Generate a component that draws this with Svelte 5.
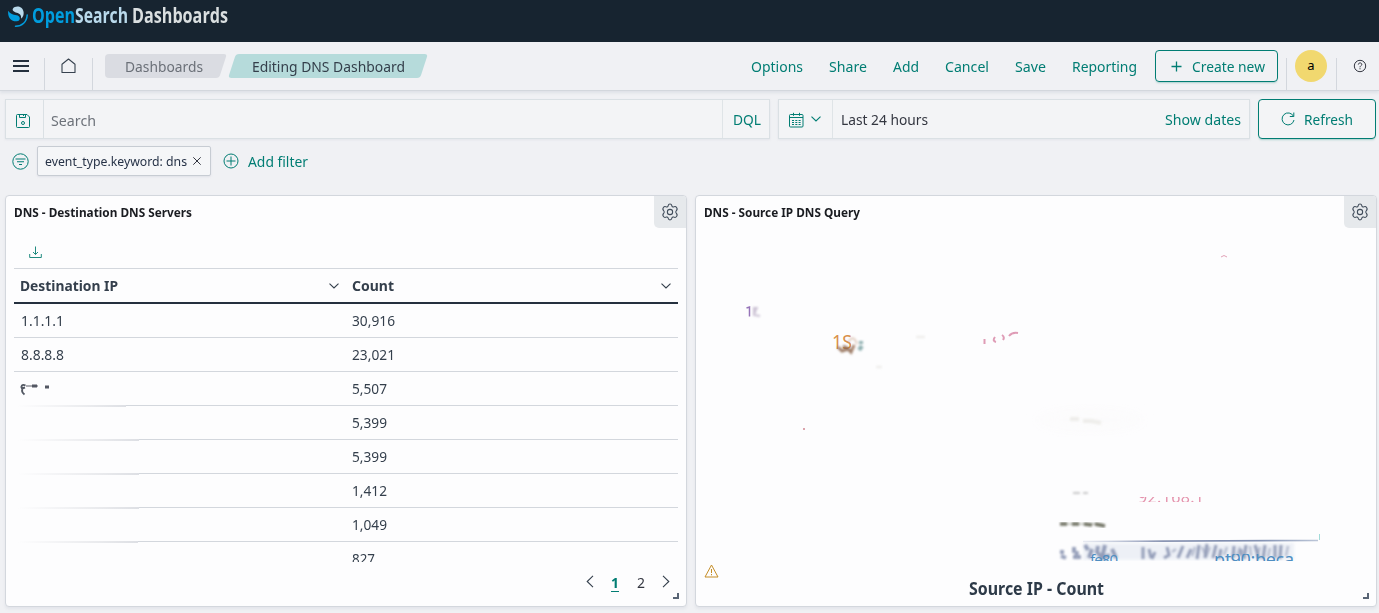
<script lang="ts">
  // Condenses a label horizontally so that it fills its column exactly.
  function fit(node: HTMLElement, width: number) {
    const inner = node.firstElementChild as HTMLElement;
    const natural = inner.getBoundingClientRect().width;
    if (natural) inner.style.transform = `scaleX(${width / natural})`;
  }

  const menu = [
    { label: 'Options', width: 52 },
    { label: 'Share', width: 38 },
    { label: 'Add', width: 26 },
    { label: 'Cancel', width: 44 },
    { label: 'Save', width: 31 },
    { label: 'Reporting', width: 65 }
  ];

  const rows = [
    { ip: '1.1.1.1', count: '30,916', width: 43, fade: 0 },
    { ip: '8.8.8.8', count: '23,021', width: 43, fade: 0 },
    { ip: '', count: '5,507', width: 35, fade: 112 },
    { ip: '', count: '5,399', width: 35, fade: 125 },
    { ip: '', count: '5,399', width: 35, fade: 125 },
    { ip: '', count: '1,412', width: 35, fade: 125 },
    { ip: '', count: '1,049', width: 35, fade: 124 },
    { ip: '', count: '827', width: 23, fade: 0 }
  ];
</script>

{#snippet t(text: string, width: number)}
  <span class="fit" style:width="{width}px" use:fit={width}><span>{text}</span></span>
{/snippet}

{#snippet gear()}
  <button class="gear" aria-label="Panel options">
    <svg width="18" height="18" viewBox="-.5 -.5 17 17" fill="none" stroke="#404c5a" stroke-linejoin="round">
      <path d="M6.200 2.300Q6.500.500 8 .500T9.800 2.300Q10.200 3.500 11.300 3.200 13.300 2.300 14.200 3.700 15.400 5.500 14 6.600 12.800 8 14 9.400 15.400 10.500 14.200 12.300 13.300 13.700 11.300 12.800 10.200 12.500 9.800 13.700 9.500 15.500 8 15.500T6.200 13.700Q5.800 12.500 4.700 12.800 2.700 13.700 1.800 12.300.600 10.500 2 9.400 3.200 8 2 6.600.600 5.500 1.800 3.700 2.700 2.300 4.700 3.200 5.800 3.500 6.200 2.300Z" />
      <circle cx="8" cy="8" r="2.500" />
    </svg>
  </button>
{/snippet}

{#snippet chevron()}
  <svg class="chev" width="10" height="6" viewBox="0 0 10 6" fill="none" stroke="currentColor" stroke-width="1.100"><path d="M.5.7 5 5 9.500.7" /></svg>
{/snippet}

<div class="page">
  <header class="brand">
    <svg class="mark" width="20" height="22" viewBox="0 0 20 22">
      <path d="M.200 5.700C-.600 12.500 3.400 16.700 8.700 16.300c3.100-.3 4-3.300 2.100-5.100C8.300 8.900 3.700 11 .200 5.700Z" fill="#009dde" />
      <path d="M5 3.400C7.200.300 14.700.500 15.600 7c.4 3.400-1.200 6-2.500 6.500.500-3.700-1.700-5-4.300-5.800C6 6.900 3.800 5.300 5 3.400Z" fill="#b9d9eb" />
      <path d="M19.200 10C18.800 17 14 21.200 7.500 21.200" fill="none" stroke="#009dde" stroke-width="1.500" stroke-linecap="round" />
    </svg>
    <span class="open">{@render t('Open', 43)}</span><span class="search-word">{@render t('Search', 53)}</span><span class="dash">{@render t('Dashboards', 96)}</span>
  </header>

  <nav class="nav">
    <button class="burger" aria-label="Menu"><i></i><i></i><i></i></button>
    <span class="rule"></span>
    <button class="home" aria-label="Home">
      <svg width="15" height="16" viewBox="0 0 15 16" fill="none" stroke="#37424f" stroke-width="1.100"><path d="M1 14.500V6.200L7.500 1 14 6.200V14.500Z" stroke-linejoin="round" /></svg>
    </button>
    <span class="rule"></span>
    <div class="crumb first">{@render t('Dashboards', 78)}</div>
    <div class="crumb last">{@render t('Editing DNS Dashboard', 153)}</div>
    <div class="menu">
      {#each menu as item}<span>{@render t(item.label, item.width)}</span>{/each}
    </div>
    <button class="create">
      <svg width="11" height="11" viewBox="0 0 11 11" stroke="#017d73" stroke-width="1.300"><path d="M5.500.5v10M.5 5.500h10" /></svg>
      {@render t('Create new', 73)}
    </button>
    <span class="rule r3"></span>
    <span class="avatar">a</span>
    <span class="rule r4"></span>
    <svg class="help" width="14" height="14" viewBox="0 0 14 14" fill="none" stroke="#343741"><circle cx="7" cy="7" r="5.700" /><path d="M5.300 5.600c0-2.300 3.500-2.200 3.500-.2C8.800 6.700 7 6.700 7 8.300M7 9.200v1.100" /></svg>
  </nav>

  <section class="query">
    <div class="box search">
      <span class="save">
        <svg width="14" height="14" viewBox="0 0 14 14" fill="none" stroke="#017d73"><path d="M.5 1.500q0-1 1-1h9.500l2.500 2.500v9.500q0 1-1 1h-11q-1 0-1-1ZM3.500.5v3h6v-3M7.500.5v1.500" /><circle cx="7" cy="9" r="1.500" /></svg>
      </span>
      <span class="placeholder">{@render t('Search', 45)}</span>
      <span class="dql">{@render t('DQL', 28)}</span>
    </div>
    <div class="box date">
      <span class="cal">
        <svg width="15" height="16" viewBox="0 0 15 16" fill="none" stroke="#017d73"><rect x=".5" y="2.500" width="13.500" height="12.500" rx="1" /><path d="M.5 5.500h13.500M4.500.8v3M10.500.8v3" /><path d="M3 8.500h9M3 10.500h9M3 12.500h9" stroke-dasharray="2 1.300" /></svg>
        {@render chevron()}
      </span>
      <span class="range">{@render t('Last 24 hours', 87)}</span>
      <span class="show">{@render t('Show dates', 76)}</span>
    </div>
    <button class="refresh">
      <svg width="14" height="14" viewBox="0 0 14 14" fill="none" stroke="#017d73"><path d="M12.500 4.300A6 6 0 1 0 13 8M12.800.5v4h-4" /></svg>
      {@render t('Refresh', 49)}
    </button>
  </section>

  <section class="filters">
    <svg width="17" height="17" viewBox="0 0 17 17" fill="none" stroke="#017d73"><circle cx="8.500" cy="8.500" r="7.700" /><path d="M3.500 6h10M5 8.800h7M7 11.500h3" stroke-width="1.100" /></svg>
    <span class="pill"><span class="term">{@render t('event_type.keyword: dns', 142)}</span><svg width="8" height="8" viewBox="0 0 8 8" stroke="#343741" stroke-width="1"><path d="m.3.3 7.400 7.400M7.700.3.3 7.700" /></svg></span>
    <svg class="plus" width="16" height="16" viewBox="0 0 16 16" fill="none" stroke="#017d73"><circle cx="8" cy="8" r="7" /><path d="M8 3.500v9M3.500 8h9" /></svg>
    <span class="add">{@render t('Add filter', 60)}</span>
  </section>

  <main class="grid">
    <article class="panel">
      <div class="head"><h2>{@render t('DNS - Destination DNS Servers', 178)}</h2>{@render gear()}</div>
      <div class="download">
        <svg width="13" height="13" viewBox="0 0 13 13" fill="none" stroke="#218b80"><path d="M6.500.5v8M4 6l2.500 2.500L9 6M.7 8v3.500h11.600V8" /></svg>
      </div>
      <div class="table">
        <div class="tr th">
          <div class="td">{@render t('Destination IP', 98)}{@render chevron()}</div>
          <div class="td">{@render t('Count', 42)}{@render chevron()}</div>
        </div>
        {#each rows as row, i}
          <div class="tr">
            <div class="td" class:faded={row.fade} style:--fade="{row.fade}px">
              {#if row.ip}<span class="ip">{@render t(row.ip, row.width)}</span>{/if}
              {#if i === 2}
                <svg class="smudge" width="38" height="20" viewBox="0 0 38 20" fill="none">
                  <defs><filter id="soft"><feGaussianBlur stdDeviation=".65" /></filter></defs>
                  <g filter="url(#soft)" stroke="#535963">
                    <path d="M5.500 3.500C2 1.500.5 5 2 6.500l3-1M2.500 7c-1 2 0 4 2 5.500" stroke-width="1.900" />
                    <path d="M6 4h12" stroke-width="1.300" opacity=".75" /><path d="M12 4h5M25 5h4" stroke-width="3" />
                  </g>
                </svg>
              {/if}
            </div>
            <div class="td">{@render t(row.count, row.width)}</div>
          </div>
        {/each}
      </div>
      <div class="pager">
        <svg width="8" height="13" viewBox="0 0 8 13" fill="none" stroke="#343f4c" stroke-width="1.100"><path d="M7 .8 1.200 6.500 7 12.200" /></svg>
        <span class="current">{@render t('1', 8)}</span><span class="other">{@render t('2', 8)}</span>
        <svg width="8" height="13" viewBox="0 0 8 13" fill="none" stroke="#343f4c" stroke-width="1.100"><path d="M1 .8 6.800 6.500 1 12.200" /></svg>
      </div>
      <i class="handle"></i>
    </article>

    <article class="panel">
      <div class="head"><h2>{@render t('DNS - Source IP DNS Query', 156)}</h2>{@render gear()}</div>
      <svg class="cloud" width="680" height="333" viewBox="696 228 680 333">
        <defs>
          <filter id="b1" x="-20%" y="-80%" width="140%" height="260%"><feGaussianBlur stdDeviation=".8" /></filter>
          <filter id="b2" x="-20%" y="-80%" width="140%" height="260%"><feGaussianBlur stdDeviation="1.400" /></filter>
          <filter id="b8"><feGaussianBlur stdDeviation="5" /></filter>
          <clipPath id="c1"><rect x="830" y="330" width="21" height="19" /></clipPath>
          <clipPath id="c2"><path d="M1130 497h88v5h-88z" /></clipPath>
          <clipPath id="c3"><path d="M1085 554h212v7h-212z" /></clipPath>
          <linearGradient id="lg" x1="1080" x2="1318" gradientUnits="userSpaceOnUse"><stop stop-color="#a8b3cd" stop-opacity=".2" /><stop offset=".35" stop-color="#7c88a9" /><stop offset=".75" stop-color="#8291b2" /><stop offset="1" stop-color="#bcc6d8" /></linearGradient>
        </defs>
        <ellipse cx="1090" cy="420" rx="55" ry="14" fill="#fbfafb" opacity=".5" filter="url(#b8)" />
        <g fill="none">
          <path d="M746.500 308l3-1v9.500" stroke="#9674b9" stroke-width="1.500" />
          <path d="M753 308h5M754 309v6l6 1M756 309l-1 4" stroke="#b3a4bf" stroke-width="2" opacity=".65" filter="url(#b1)" />
          <text x="832" y="348.500" font-size="20" fill="#d99049" clip-path="url(#c1)" textLength="20" lengthAdjust="spacingAndGlyphs">1S</text>
          <g filter="url(#b1)">
            <path d="M838 347l4 4 6-2 3 3 3-7M843 346l6 3" stroke="#8e6950" stroke-width="3" opacity=".85" />
            <path d="M848 343q5-10 9 1M853 350l2-5" stroke="#c9a287" stroke-width="2" opacity=".5" />
            <path d="M861 341v3M862 346l-3 4" stroke="#729b9c" stroke-width="4" opacity=".8" />
          </g>
          <g stroke="#d98ba9" stroke-width="2" opacity=".85"><path d="M984.500 339v5M995 337q-3 4 1 5M1002 335q3 2 1 5M1009 336q3-4 9-3" /></g>
          <path d="M1221 257q3-3 6 0" stroke="#e2a2b7" /><circle cx="804" cy="429" r="1" fill="#cf8690" />
          <g filter="url(#b1)" stroke="#d6d3cc"><path d="M1070 419h9M1083 421h8l10 2" stroke-width="4" opacity=".35" /><path d="M916 337h9M876 367h6" stroke-width="3" opacity=".3" /><path d="M1073 493h7M1083 493h5" stroke="#969696" stroke-width="2" opacity=".5" /></g>
          <text x="1138" y="503" font-size="16" fill="#df7999" clip-path="url(#c2)" textLength="66" opacity=".8">92.168.1</text>
          <g filter="url(#b1)" stroke="#6c6e5e"><path d="M1060 524h7M1072 524h7M1084 524l8 1M1095 524l10 2" stroke-width="3.500" opacity=".95" /><path d="M1062 524h40" stroke-width="1.500" opacity=".5" /></g>
          <path d="M1083 541.500 1318 540.500" stroke="url(#lg)" stroke-width="1.700" />
          <path d="M1319.500 534v6" stroke="#70c9c5" opacity=".65" />
          <rect x="1083" y="543" width="211" height="17" fill="#dfe5f0" filter="url(#b2)" opacity=".5" />
          <g filter="url(#b1)" stroke="#7682a4" opacity=".75">
            <path d="M1060 552h4M1061 556l5 2M1074 547v6M1073 557h8M1077 551l-1 8M1085 545l3 5M1092 549l-3 9M1098 546l-1 6 5 6M1105 545l-3 13 8-3M1112 549l4 9" stroke-width="4" />
            <path d="M1143 547v12M1149 549l2 9M1155 552l-3 7M1167 547l2 8-5 3M1178 558l5-12M1187 558l4-9M1197 559l2-14M1205 558l2-14M1213 558l3-13M1221 549l-2 10M1234 546l-1 12M1241 549v7M1246 545l-2 14M1255 545l4 14M1265 545l-2 14M1275 545v13M1281 545l-1 14" stroke-width="3" />
            <path d="M1172 552l4-3M1192 556l3-9M1202 547l4 9M1210 547l-4 10M1227 547l-3 8M1237 556l3-9M1250 546l1 10M1260 547l-3 10M1270 548l-2 9M1288 546l-2 10" stroke-width="2.500" opacity=".6" />
          </g>
          <text x="1090" y="565" font-size="15" fill="#4f8ec2" clip-path="url(#c3)" textLength="28">fe80</text>
          <text x="1214" y="566" font-size="18" fill="#4f8ec2" clip-path="url(#c3)" textLength="80">pf90:beca</text>
        </g>
      </svg>
      <div class="caption">
        <svg width="15" height="14" viewBox="0 0 15 14" fill="none" stroke="#c58d26"><path d="M7.500 1 14 13H1Z" stroke-linejoin="round" /><path d="M7.500 5v4M7.500 10v1.300" /></svg>
        {@render t('Source IP - Count', 135)}
      </div>
      <i class="handle"></i>
    </article>
  </main>
</div>

<style>
  :global(body) { margin: 0; background: #f0f1f4; overflow: hidden; }
  .page { width: 1379px; height: 613px; overflow: hidden; display: flex; flex-direction: column; font: 15px/20px "Noto Sans", "Open Sans", sans-serif; color: #343741; background: #f0f1f4; }
  .page * { box-sizing: border-box; }
  button { font: inherit; color: inherit; background: none; border: 0; padding: 0; display: flex; align-items: center; }
  svg { display: block; flex: none; }
  .fit { display: inline-block; white-space: nowrap; flex: none; }
  .fit > span { display: inline-block; transform-origin: 0 50%; }

  .brand { height: 42px; flex: none; background: #172430; display: flex; align-items: flex-start; padding: 5px 0 0 8px; font: bold 22px/20px "Open Sans", sans-serif; }
  .brand > span { margin-top: -1px; }
  .mark { margin: 0 4px 0 0; }
  .open { color: #009dde; }
  .search-word { color: #b9d9eb; }
  .brand .dash { color: #dadfe0; margin-left: 4px; }

  .nav { height: 49px; flex: none; display: flex; align-items: center; border-bottom: 1px solid #d3d7dd; box-shadow: 0 2px 3px #98a2b333; padding-left: 13px; }
  .burger { width: 16px; height: 12px; flex-direction: column; justify-content: space-between; align-items: stretch; }
  .burger i { height: 2px; background: #25303e; }
  .rule { width: 1px; height: 32px; align-self: flex-end; background: #d3d7dd; flex: none; margin-left: 15px; }
  .home { margin-left: 16px; }
  .home + .rule { margin-left: 16px; }
  .crumb { height: 24px; position: relative; z-index: 0; display: flex; align-items: center; }
  .first { width: 121px; margin-left: 12px; padding-left: 20px; color: #6b7078; }
  .first::before, .first::after { content: ""; position: absolute; z-index: -1; inset: 0 20px 0 0; border-radius: 4px 0 0 4px; background: #dadce2; }
  .first::after { inset: 0 3px 0 40px; border-radius: 0 3px 3px 0; transform: skewX(-18deg); }
  .last { width: 200px; margin-left: 2px; padding-left: 24px; color: #343f4b; }
  .last::before { content: ""; position: absolute; z-index: -1; inset: 0 4px; border-radius: 3px; background: #b6dbdb; transform: skewX(-18deg); }
  .menu { display: flex; gap: 26px; margin-left: 323px; color: #017d73; }
  .menu span:last-child { position: static; }
  .create { width: 123px; height: 32px; margin-left: 18px; border: 1px solid #017d73; border-radius: 4px; padding-left: 15px; gap: 10px; color: #017d73; box-shadow: 0 2px 2px -1px #017d734d; }
  .r3 { margin-left: 8px; }
  .avatar { width: 32px; height: 32px; border-radius: 50%; background: #f1d86f; color: #000; text-align: center; line-height: 31px; font-size: 13px; margin-left: 8px; }
  .r4 { margin-left: 9px; }
  .help { margin-left: 16px; }

  .query { display: flex; gap: 8px; padding: 8px 0 0 5px; height: 48px; flex: none; }
  .box { height: 40px; border: 1px solid #dae0e4; background: #f3f4f6; box-shadow: 0 1px 2px #98a2b326; display: flex; align-items: stretch; }
  .box > span { display: flex; align-items: center; }
  .search { width: 765px; }
  .save { width: 38px; padding: 3px 0 0 10px; border-right: 1px solid #dae0e4; }
  .placeholder { flex: 1; padding: 2px 0 0 7px; color: #6d727a; }
  .dql { width: 47px; padding-left: 10px; border-left: 1px solid #dfe4e7; color: #017d73; }
  .date { width: 472px; }
  .cal { width: 54px; padding-left: 10px; gap: 7px; border-right: 1px solid #dfe4e7; color: #017d73; }
  .cal > svg:first-child { margin-top: 2px; }
  .range { flex: 1; padding-left: 8px; }
  .show { color: #017d73; padding-right: 8px; }
  .refresh { width: 118px; height: 40px; border: 1px solid #017d73; border-radius: 4px; padding-left: 22px; gap: 9px; color: #017d73; background: #f3f4f6; box-shadow: 0 2px 2px -1px #017d734d; }

  .filters { display: flex; align-items: center; height: 30px; margin-top: 7px; padding-left: 12px; flex: none; }
  .pill { width: 174px; height: 30px; margin-left: 8px; border: 1px solid #c7ccd3; border-radius: 2px; background: #f5f6f8; display: flex; align-items: center; padding-left: 7px; gap: 6px; font-size: 13px; color: #263247; box-shadow: 0 1px 2px #98a2b330; }
  .plus { margin: 0 0 1px 12px; }
  .add { margin-left: 9px; color: #017d73; }

  .grid { display: flex; gap: 8px; padding: 19px 0 0 5px; }
  .panel { width: 682px; height: 412px; border: 1px solid #d3d7dd; border-radius: 4px; background: #fdfdfe; box-shadow: 0 2px 3px #98a2b326; position: relative; display: flex; flex-direction: column; flex: none; }
  .head { display: flex; justify-content: space-between; height: 32px; flex: none; }
  h2 { margin: 0; padding: 6px 0 0 8px; font-size: 13px; line-height: 20px; font-weight: 700; color: #1a1c21; }
  .gear { width: 32px; height: 32px; justify-content: center; background: #e6e9ec; border-radius: 0 3px 0 5px; }
  .download { height: 40px; padding: 18px 0 0 23px; flex: none; }
  .table { height: 294px; margin: 0 8px; overflow: hidden; border-top: 1px solid #d3d7dd; flex: none; color: #343f4c; }
  .tr { display: flex; height: 34px; }
  .td { width: 332px; padding: 0 0 2px 6px; display: flex; align-items: center; border-bottom: 1px solid #d3d7dd; position: relative; }
  .th { height: 35px; border-bottom: 2px solid #25303e; font-weight: 700; }
  .th .td { border: 0; justify-content: space-between; padding: 0 7px 0 6px; }
  .th .fit { margin-top: -2px; }
  .ip { padding-left: 1px; }
  .faded { border-bottom: 0; background: linear-gradient(#d3d7dd, #d3d7dd) right bottom / calc(100% - var(--fade)) 1px no-repeat; padding-bottom: 3px; }
  .faded::after { content: ""; position: absolute; left: 0; bottom: -1px; width: var(--fade); height: 2px; background: linear-gradient(90deg, transparent 3%, #e9eaed 70%, #dddfe4); }
  .smudge { margin-top: 9px; }
  .pager { display: flex; align-items: center; height: 30px; margin: 5px 16px 0 0; justify-content: flex-end; font-size: 14px; }
  .current { color: #017d73; font-weight: 700; margin: 2px 18px 0 17px; position: relative; }
  .current::after { content: ""; position: absolute; left: 0; right: 0; bottom: 1px; height: 1px; background: #017d73; }
  .other { margin-top: 2px; }
  .pager svg { margin-bottom: 1px; }
  .pager svg:last-child { margin-left: 17px; }
  .handle { position: absolute; right: 7px; bottom: 7px; width: 6px; height: 6px; border: solid #596575; border-width: 0 2px 2px 0; }
  .cloud { font-family: "Noto Sans", sans-serif; }
  .caption { height: 48px; display: flex; align-items: center; padding: 11px 0 0 8px; font-size: 17px; line-height: 24px; font-weight: 700; color: #2d3a48; }
  .caption svg { margin: -36px 250px 0 0; }
</style>
